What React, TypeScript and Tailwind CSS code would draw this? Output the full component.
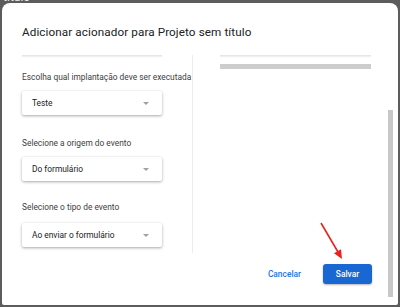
import React from 'react';

type SelectProps = { value: string };

function FakeSelect({ value }: SelectProps) {
  return (
    <div className="flex h-[24px] w-[140px] items-center justify-between rounded-[2px] bg-white pl-[10px] pr-[13px] shadow-[0_1px_3px_rgba(0,0,0,0.35)]">
      <span className="text-[8.4px] leading-none text-[#202124]">{value}</span>
      <span className="h-0 w-0 border-x-[3.5px] border-t-[3.5px] border-x-transparent border-t-[#a0a0a0]" />
    </div>
  );
}

function FieldLabel({ children }: { children: React.ReactNode }) {
  return <div className="h-[12px] text-[8.35px] leading-[12px] text-[#3c4043] whitespace-nowrap">{children}</div>;
}

export default function App() {
  return (
    <div className="relative h-[307px] w-[400px] overflow-hidden bg-[#5c5c5c] pl-[2px] pt-[3px] font-['Roboto','Liberation_Sans',sans-serif]">
      <div className="absolute left-[3px] top-[-9px] text-[12px] leading-[12px] text-[#e8e8e8]">título</div>

      <div className="relative flex h-[302px] w-[396px] flex-col rounded-t-[8px] rounded-b-[2px] bg-white">
        <div className="h-[37px] pl-[20px] pt-[21px]">
          <h1 className="text-[11.7px] leading-[16px] tracking-[0.1px] text-[#202124] whitespace-nowrap">
            Adicionar acionador para Projeto sem título
          </h1>
        </div>

        <div className="mt-[15px] flex h-[198px] pl-[20px]">
          <div className="w-[140px]">
            <div className="h-px bg-[#e6e6e6] shadow-[0_1px_1px_rgba(0,0,0,0.08)]" />
            <div className="mt-[15px]">
              <FieldLabel>Escolha qual implantação deve ser executada</FieldLabel>
            </div>
            <div className="mt-[8px]">
              <FakeSelect value="Teste" />
            </div>
            <div className="mt-[22px]">
              <FieldLabel>Selecione a origem do evento</FieldLabel>
            </div>
            <div className="mt-[8px]">
              <FakeSelect value="Do formulário" />
            </div>
            <div className="mt-[20px]">
              <FieldLabel>Selecione o tipo de evento</FieldLabel>
            </div>
            <div className="mt-[10px]">
              <FakeSelect value="Ao enviar o formulário" />
            </div>
          </div>

          <div className="ml-[30px] w-px bg-[#ececec]" />

          <div className="ml-[27px] w-[151px]">
            <div className="h-px bg-[#e6e6e6] shadow-[0_1px_1px_rgba(0,0,0,0.08)]" />
            <div className="mt-[8px] h-[5px] bg-[#cdcdcd]" />
          </div>
        </div>

        <div className="mt-[11px] flex h-[20px] items-center justify-end pr-[26px]">
          <button className="mr-[22px] text-[8.4px] font-medium text-[#1a73e8]">Cancelar</button>
          <button className="flex h-[20px] w-[49px] items-center justify-center rounded-[3px] bg-[#1967d2] text-[8.4px] font-medium text-white shadow-[0_1px_2px_rgba(0,0,0,0.3)]">
            Salvar
          </button>
        </div>

        <div className="absolute left-[386px] top-[107px] h-[187px] w-[5px] bg-[#c8c8c8]" />
      </div>

      <svg className="absolute left-0 top-0" width="400" height="307" viewBox="0 0 400 307">
        <line x1="321" y1="223" x2="338" y2="252" stroke="#e8231f" strokeWidth="1.6" />
        <polygon points="342,259 334,253.2 341,249.2" fill="#e8231f" />
      </svg>
    </div>
  );
}
